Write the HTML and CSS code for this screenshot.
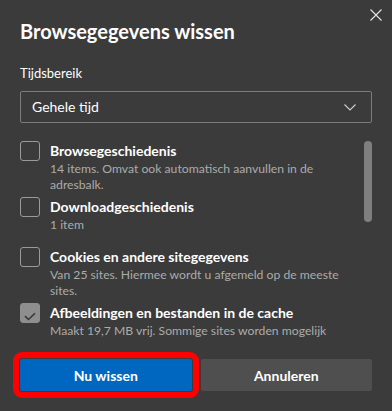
FILE: index.html
```html
<!DOCTYPE html>
<html lang="nl">
<head>
  <meta charset="UTF-8" />
  <meta name="viewport" content="width=device-width, initial-scale=1.0"/>
  <title>Browsegegevens wissen</title>
  <link rel="stylesheet" href="styles.css">
</head>
<body>
  <div class="dialog">
    <div class="head">
      <h1>Browsegegevens wissen</h1>
      <button class="close" aria-label="Sluiten">
        <svg width="12" height="12" viewBox="0 0 12 12"><path d="M0.5 0.5 L11.5 11.5 M11.5 0.5 L0.5 11.5" stroke="#e6e6e6" stroke-width="1.1" fill="none"/></svg>
      </button>
    </div>

    <div class="field-label">Tijdsbereik</div>
    <div class="select">
      <span>Gehele tijd</span>
      <svg class="chev" width="12" height="7" viewBox="0 0 12 7"><polyline points="0.5,0.5 6,6 11.5,0.5" stroke="#cfcfcf" stroke-width="1.1" fill="none"/></svg>
    </div>

    <div class="list">
      <div class="items">
        <div class="item">
          <span class="box"></span>
          <div class="text">
            <div class="name">Browsegeschiedenis</div>
            <div class="desc">14 items. Omvat ook automatisch aanvullen in de adresbalk.</div>
          </div>
        </div>
        <div class="item">
          <span class="box"></span>
          <div class="text">
            <div class="name">Downloadgeschiedenis</div>
            <div class="desc">1 item</div>
          </div>
        </div>
        <div class="item">
          <span class="box"></span>
          <div class="text">
            <div class="name">Cookies en andere sitegegevens</div>
            <div class="desc">Van 25 sites. Hiermee wordt u afgemeld op de meeste sites.</div>
          </div>
        </div>
        <div class="item">
          <span class="box checked">
            <svg width="20" height="20" viewBox="0 0 20 20"><polyline points="5,13.2 8.5,16.5 15,10.2" stroke="#363636" stroke-width="1.6" fill="none"/></svg>
          </span>
          <div class="text">
            <div class="name">Afbeeldingen en bestanden in de cache</div>
            <div class="desc">Maakt 19,7 MB vrij. Sommige sites worden mogelijk</div>
          </div>
        </div>
      </div>
      <div class="track"><div class="thumb"></div></div>
    </div>

    <div class="actions">
      <button class="btn primary">Nu wissen</button>
      <button class="btn">Annuleren</button>
    </div>
  </div>
</body>
</html>
```

FILE: styles.css
```css
body {
  margin: 0;
  background-color: #3b3b3b;
  font-family: 'Lato', 'Open Sans', sans-serif;
  color: #fff;
  overflow: hidden;
}
.dialog {
  width: 392px;
  height: 411px;
  padding: 0 20px;
  box-sizing: border-box;
}
.head {
  display: flex;
  align-items: flex-start;
  padding-top: 9px;
  margin-right: -10px;
}
h1 {
  flex: 1;
  margin: 8px 0 0;
  font-size: 20px;
  line-height: 28px;
  font-weight: 700;
}
.close {
  width: 12px;
  height: 12px;
  padding: 0;
  border: none;
  background: none;
  display: flex;
}
.field-label {
  margin-top: 20px;
  font-size: 13px;
  line-height: 16px;
}
.select {
  margin-top: 10px;
  height: 32px;
  box-sizing: border-box;
  border: 1px solid #7c7c7c;
  border-radius: 2px;
  display: flex;
  align-items: center;
  justify-content: space-between;
  padding: 0 15px 0 11px;
  font-size: 14px;
  line-height: 20px;
}
.chev { margin-top: 1px; }
.list {
  margin-top: 18px;
  height: 201px;
  overflow: hidden;
  display: flex;
}
.items { flex: 1; }
.item {
  display: flex;
  gap: 10px;
  min-height: 50px;
  padding-bottom: 4px;
  box-sizing: border-box;
}
.box {
  flex: none;
  width: 20px;
  height: 20px;
  box-sizing: border-box;
  border: 1px solid #9a9a9a;
  border-radius: 3px;
}
.box.checked {
  background-color: #8e8e8e;
  border-color: #8e8e8e;
}
.box.checked svg { margin: -1px; }
.text {
  padding-right: 12px;
}
.name {
  font-size: 14px;
  line-height: 20px;
  font-weight: 700;
}
.desc {
  font-size: 12.2px;
  line-height: 16px;
  color: #ababab;
}
.track {
  width: 8px;
  flex: none;
}
.thumb {
  height: 81px;
  background-color: #7f7f7f;
  border-radius: 4px;
}
.actions {
  display: flex;
  gap: 9px;
  padding-top: 17px;
}
.btn {
  flex: 1;
  height: 32px;
  border: none;
  border-radius: 2px;
  background-color: #4f4f4f;
  color: #fff;
  font-family: inherit;
  font-size: 14px;
  font-weight: 700;
}
.btn.primary {
  background-color: #0067c0;
  outline: 6px solid #ff0000;
  outline-offset: 1px;
}
```
